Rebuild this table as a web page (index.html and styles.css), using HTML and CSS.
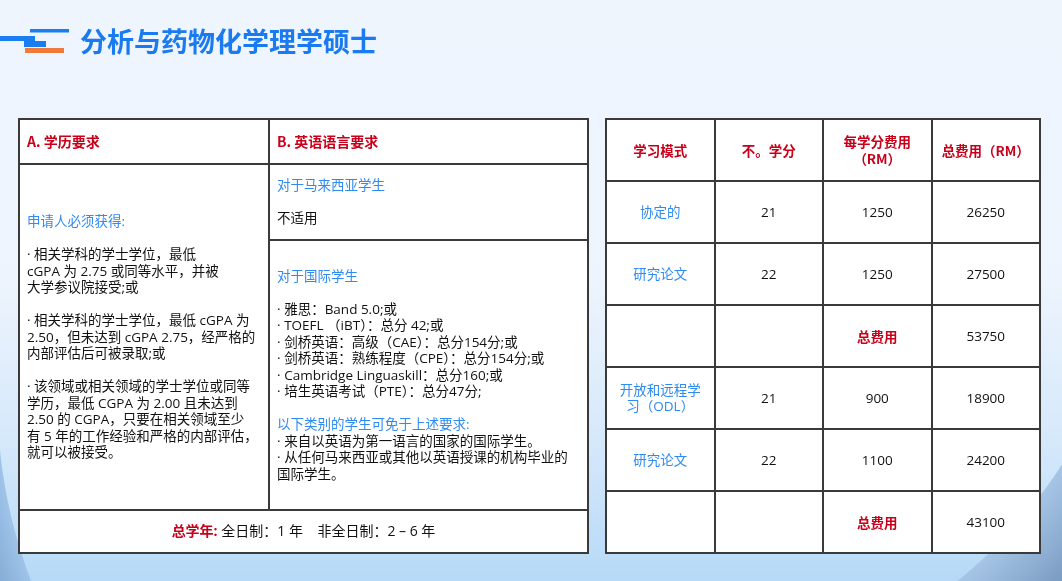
FILE: index.html
```html
<!DOCTYPE html>
<html lang="zh">
<head>
<meta charset="utf-8">
<title>分析与药物化学理学硕士</title>
<link rel="stylesheet" href="styles.css">
</head>
<body>
<header class="head">
  <svg class="logo" width="70" height="26" viewBox="0 0 70 26" aria-hidden="true">
    <rect x="30" y="1" width="39" height="3.5" fill="#1a7ef0"/>
    <rect x="0" y="8" width="35" height="5" fill="#1a7ef0"/>
    <rect x="24" y="13" width="22" height="6" fill="#1a7ef0"/>
    <rect x="25" y="20" width="39" height="5" fill="#f07a3c"/>
  </svg>
  <h1 class="title">分析与药物化学理学硕士</h1>
</header>
<main class="content">
  <table class="req">
    <colgroup><col class="c-a"><col class="c-b"></colgroup>
    <tr class="r-head">
      <th>A. 学历要求</th>
      <th>B. 英语语言要求</th>
    </tr>
    <tr class="r-my">
      <td rowspan="2" class="cell">
        <p class="blue">申请人必须获得:</p>
        <p>· 相关学科的学士学位，最低<br>cGPA 为 2.75 或同等水平，并被<br>大学参议院接受;或</p>
        <p>· 相关学科的学士学位，最低 cGPA 为<br>2.50，但未达到 cGPA 2.75，经严格的<br>内部评估后可被录取;或</p>
        <p>· 该领域或相关领域的学士学位或同等<br>学历，最低 CGPA 为 2.00 且未达到<br>2.50 的 CGPA，只要在相关领域至少<br>有 5 年的工作经验和严格的内部评估，<br>就可以被接受。</p>
      </td>
      <td class="cell">
        <p class="blue">对于马来西亚学生</p>
        <p>不适用</p>
      </td>
    </tr>
    <tr class="r-intl">
      <td class="cell">
        <p class="blue">对于国际学生</p>
        <p>· 雅思：Band 5.0;或<br>· TOEFL （iBT）：总分 42;或<br>· 剑桥英语：高级（CAE）：总分154分;或<br>· 剑桥英语：熟练程度（CPE）：总分154分;或<br>· Cambridge Linguaskill：总分160;或<br>· 培生英语考试（PTE）：总分47分;</p>
        <p><span class="blue">以下类别的学生可免于上述要求:</span><br>· 来自以英语为第一语言的国家的国际学生。<br>· 从任何马来西亚或其他以英语授课的机构毕业的<br>国际学生。</p>
      </td>
    </tr>
    <tr class="r-foot">
      <td colspan="2"><strong class="red">总学年:</strong> 全日制：1 年&nbsp;&nbsp;&nbsp; 非全日制：2 – 6 年</td>
    </tr>
  </table>

  <table class="fees">
    <tr>
      <th>学习模式</th>
      <th>不。学分</th>
      <th>每学分费用<br>（RM）</th>
      <th>总费用（RM）</th>
    </tr>
    <tr><td class="blue">协定的</td><td>21</td><td>1250</td><td>26250</td></tr>
    <tr><td class="blue">研究论文</td><td>22</td><td>1250</td><td>27500</td></tr>
    <tr><td></td><td></td><td class="red b">总费用</td><td>53750</td></tr>
    <tr><td class="blue">开放和远程学<br>习（ODL）</td><td>21</td><td>900</td><td>18900</td></tr>
    <tr><td class="blue">研究论文</td><td>22</td><td>1100</td><td>24200</td></tr>
    <tr><td></td><td></td><td class="red b">总费用</td><td>43100</td></tr>
  </table>
</main>
</body>
</html>
```
FILE: styles.css
```css
html {
  margin: 0;
  padding: 0;
  background: linear-gradient(180deg, #eef5fd 0%, #edf4fd 48%, #d6e9fb 75%, #b6d9f7 100%) no-repeat;
  background-size: 1062px 581px;
}
body {
  margin: 0;
  padding: 0;
  width: 1062px;
  height: 581px;
  overflow: hidden;
  font-family: "Open Sans", "Noto Sans CJK SC", sans-serif;
  font-size: 13.5px;
  color: #111;
}
body::before,
body::after {
  content: "";
  position: fixed;
  z-index: -1;
}
body::before {
  left: 850px;
  top: 400px;
  width: 212px;
  height: 181px;
  background: radial-gradient(circle at -200px -200px, rgba(166,197,230,0) 489px, #a6c5e6 490px, #7b9cc2 560px, #6d8fb7 640px);
}
body::after {
  left: 0;
  top: 430px;
  width: 140px;
  height: 151px;
  background: radial-gradient(circle at 500px -30px, rgba(160,196,234,0) 502px, #9fc3e9 503px, #7ea6d0 540px, #6f98c4 600px);
}
.head {
  display: flex;
  align-items: center;
  padding-top: 27px;
  height: 28px;
}
.logo {
  display: block;
  flex: none;
}
.title {
  margin: 0 0 0 10px;
  font-size: 27px;
  line-height: 28px;
  font-weight: 700;
  color: #1a7af0;
  font-family: "Noto Sans CJK SC", sans-serif;
}
.content {
  display: flex;
  align-items: flex-start;
  gap: 16px;
  padding: 63px 0 0 18px;
}
table {
  border-collapse: collapse;
  background: #fff;
}
th, td {
  border: 2px solid #3a3a3a;
  padding: 0;
  line-height: 16.5px;
}
.req {
  width: 571px;
}
.c-a { width: 251px; }
.c-b { width: 320px; }
.req th {
  text-align: left;
  padding: 0 7px;
  color: #c8001a;
  font-weight: 700;
  font-family: "Noto Sans CJK SC", sans-serif;
  font-size: 14px;
}
.r-head { height: 45px; }
.r-my { height: 76px; }
.r-intl { height: 270px; }
.r-foot { height: 43px; }
.cell {
  padding: 0 7px;
  vertical-align: middle;
}
.cell p {
  margin: 0 0 16.5px;
}
.cell p:last-child {
  margin-bottom: 0;
}
.r-foot td {
  text-align: center;
  font-size: 14px;
}
.blue { color: #2f8af2; }
.red { color: #c8001a; }
.b, .red { font-weight: 700; }
.fees {
  width: 436px;
  table-layout: fixed;
}
.fees tr { height: 62px; }
.fees th, .fees td {
  text-align: center;
  vertical-align: middle;
  width: 25%;
}
.fees th {
  color: #c8001a;
  font-weight: 700;
  font-size: 13.5px;
  line-height: 17px;
  font-family: "Noto Sans CJK SC", sans-serif;
}
.fees td.red {
  font-family: "Noto Sans CJK SC", sans-serif;
  font-size: 13.5px;
}
```
